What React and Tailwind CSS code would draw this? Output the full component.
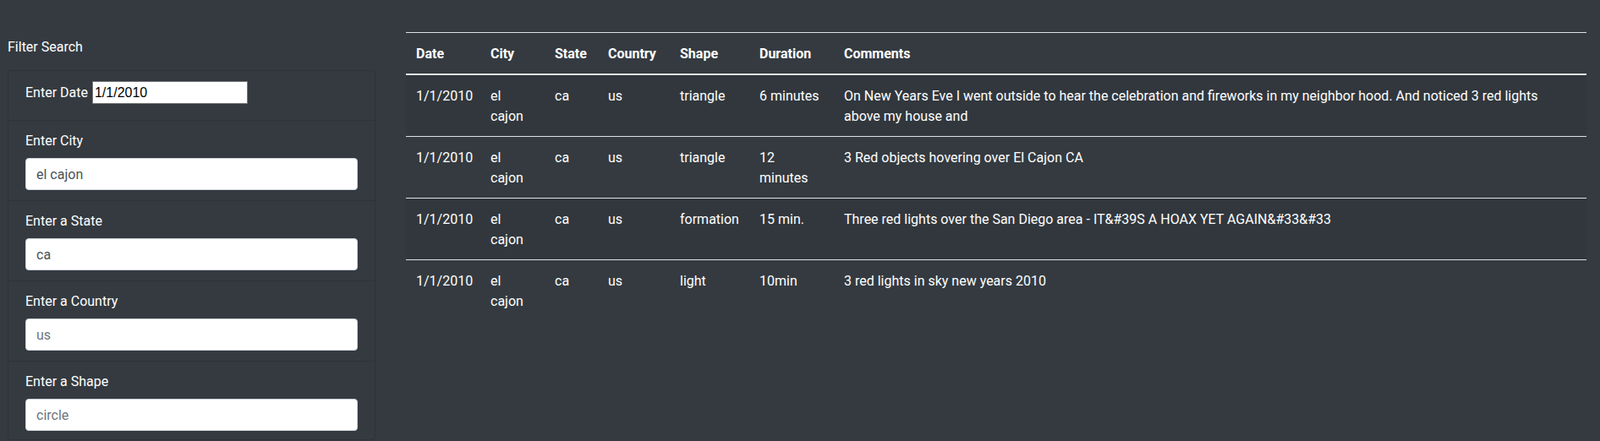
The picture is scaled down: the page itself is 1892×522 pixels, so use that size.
const sightings = [
  {
    date: "1/1/2010",
    city: "el cajon",
    state: "ca",
    country: "us",
    shape: "triangle",
    duration: "6 minutes",
    comments:
      "On New Years Eve I went outside to hear the celebration and fireworks in my neighbor hood. And noticed 3 red lights above my house and",
  },
  {
    date: "1/1/2010",
    city: "el cajon",
    state: "ca",
    country: "us",
    shape: "triangle",
    duration: "12 minutes",
    comments: "3 Red objects hovering over El Cajon CA",
  },
  {
    date: "1/1/2010",
    city: "el cajon",
    state: "ca",
    country: "us",
    shape: "formation",
    duration: "15 min.",
    comments: "Three red lights over the San Diego area - IT&#39S A HOAX YET AGAIN&#33&#33",
  },
  {
    date: "1/1/2010",
    city: "el cajon",
    state: "ca",
    country: "us",
    shape: "light",
    duration: "10min",
    comments: "3 red lights in sky new years 2010",
  },
];

const filters = [
  { label: "Enter City", value: "el cajon" },
  { label: "Enter a State", value: "ca" },
  { label: "Enter a Country", placeholder: "us" },
  { label: "Enter a Shape", placeholder: "circle" },
];

const headers = ["Date", "City", "State", "Country", "Shape", "Duration", "Comments"];

export default function App() {
  return (
    <div className="min-h-screen bg-[#343a40] text-white font-['Roboto',sans-serif] text-[16px] leading-[24px]">
      <div className="flex pl-[9px] pr-[16px]">

        {/* filter sidebar */}
        <aside className="w-[435px] shrink-0 pt-[44px]">
          <h5 className="mb-[15px]">Filter Search</h5>

          <div className="rounded border border-[#2e3338] bg-[#343a40]">
            <div className="px-[20px] pt-[12px] pb-[19px] border-b border-[#2e3338]">
              <div className="flex items-start h-[27px]">
                <label htmlFor="datetime" className="leading-[27px] mr-[5px]">Enter Date</label>
                <input
                  id="datetime"
                  type="text"
                  defaultValue="1/1/2010"
                  className="w-[184px] h-[27px] border border-[#767676] bg-white px-[2px] text-black font-['Liberation_Sans',Arial,sans-serif] text-[16px] outline-none"
                />
              </div>
            </div>

            {filters.map((f, i) => (
              <div
                key={f.label}
                className={
                  i < filters.length - 1
                    ? "px-[20px] pt-[12px] pb-[12px] border-b border-[#2e3338]"
                    : "px-[20px] pt-[12px] pb-[10px]"
                }
              >
                <label className="block mb-[8px]">{f.label}</label>
                <input
                  type="text"
                  defaultValue={f.value}
                  placeholder={f.placeholder}
                  className="block w-full h-[38px] rounded border border-[#ced4da] bg-white px-[12px] text-[#495057] placeholder:text-[#6c757d] outline-none"
                />
              </div>
            ))}
          </div>
        </aside>

        {/* results table */}
        <div className="flex-1 ml-[36px] pt-[38px]">
          <table className="w-full table-fixed border-collapse">
            <colgroup>
              <col className="w-[88px]" />
              <col className="w-[76px]" />
              <col className="w-[63px]" />
              <col className="w-[85px]" />
              <col className="w-[94px]" />
              <col className="w-[100px]" />
              <col />
            </colgroup>
            <thead>
              <tr>
                {headers.map((h) => (
                  <th
                    key={h}
                    className="text-left font-bold pt-[13px] pb-[11px] px-[12px] align-bottom border-t border-b-2 border-[#dee2e6]"
                  >
                    {h}
                  </th>
                ))}
              </tr>
            </thead>
            <tbody>
              {sightings.map((s, i) => (
                <tr key={i} className={i % 2 === 0 ? "bg-[#31373d]" : ""}>
                  {[s.date, s.city, s.state, s.country, s.shape, s.duration, s.comments].map((v, j) => (
                    <td key={j} className="pt-[13px] pb-[11px] px-[12px] align-top border-t border-[#dee2e6]">
                      {v}
                    </td>
                  ))}
                </tr>
              ))}
            </tbody>
          </table>
        </div>

      </div>
    </div>
  );
}
